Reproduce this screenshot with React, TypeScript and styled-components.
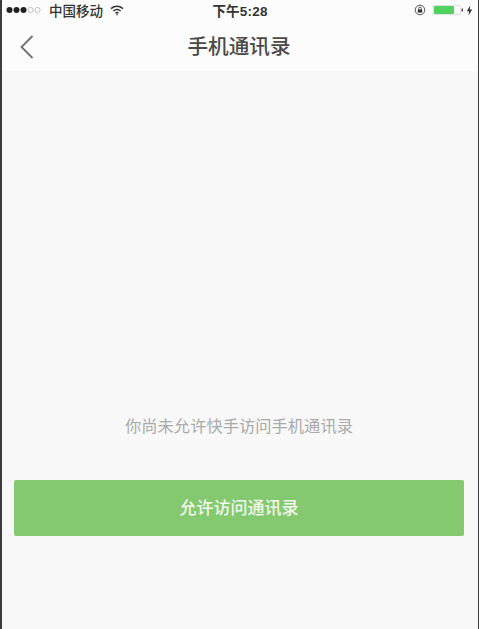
import React from "react";
import styled, { createGlobalStyle } from "styled-components";

const GlobalStyle = createGlobalStyle`
  html, body {
    margin: 0;
    padding: 0;
    background: #f8f8f8;
  }
  * {
    box-sizing: border-box;
  }
`;

const Page = styled.div`
  width: 479px;
  height: 629px;
  overflow: hidden;
  padding: 0 1px 0 2px;
  background: #3c3c3c;
  font-family: "Liberation Sans", "Noto Sans CJK SC", sans-serif;
`;

const Screen = styled.div`
  height: 100%;
  display: flex;
  flex-direction: column;
  background: #f8f8f8;
`;

const Header = styled.div`
  height: 71px;
  background: #fcfcfc;
  flex-shrink: 0;
`;

const StatusBar = styled.div`
  height: 20px;
  padding: 0 5px 0 4px;
  display: grid;
  grid-template-columns: 1fr auto 1fr;
  align-items: center;
  color: #333;
`;

const StatusLeft = styled.div`
  display: flex;
  align-items: center;
  gap: 3px;
`;

const StatusRight = styled.div`
  display: flex;
  align-items: center;
  justify-content: flex-end;
`;

const Clock = styled.div`
  font-weight: 700;
  font-size: 13.5px;
  letter-spacing: 0.2px;
  margin-left: 1px;
`;

const Carrier = styled.span`
  font-size: 13.5px;
  font-weight: 500;
  margin-right: 4px;
`;

const NavBar = styled.div`
  height: 51px;
  position: relative;
  display: flex;
  align-items: center;
  justify-content: center;
  padding-right: 2px;
`;

const BackIcon = styled.svg`
  position: absolute;
  left: 17px;
  top: 14px;
`;

const Title = styled.h1`
  margin: 0 0 2px;
  font-size: 20.6px;
  font-weight: 500;
  color: #4a4a4a;
`;

const Body = styled.div`
  flex: 1;
  display: flex;
  flex-direction: column;
  align-items: center;
  padding: 343px 14px 0 12px;
`;

const Hint = styled.p`
  margin: 0;
  font-size: 16.3px;
  line-height: 24px;
  color: #aaaaaa;
`;

const AllowButton = styled.button`
  margin-top: 42px;
  width: 100%;
  height: 56px;
  padding: 0 0 3px;
  border: none;
  border-radius: 2px;
  background: #84c870;
  color: #f2f8ec;
  font-family: inherit;
  font-size: 17px;
  font-weight: 500;
`;

export default function App() {
  return (
    <>
      <GlobalStyle />
      <Page>
        <Screen>
          <Header>
            <StatusBar>
              <StatusLeft>
                <svg width="40" height="8" viewBox="0 0 40 8">
                  <circle cx="3.5" cy="4" r="3" fill="#222" />
                  <circle cx="10.5" cy="4" r="3" fill="#222" />
                  <circle cx="17.5" cy="4" r="3" fill="#222" />
                  <circle cx="24.5" cy="4" r="2.6" fill="none" stroke="#aaa" strokeWidth="0.7" />
                  <circle cx="31.5" cy="4" r="2.6" fill="none" stroke="#aaa" strokeWidth="0.7" />
                </svg>
                <Carrier>中国移动</Carrier>
                <svg width="14" height="11" viewBox="0 0 14 11" fill="none" stroke="#333" strokeWidth="1.5">
                  <path d="M1 3.6C4.6.6 9.4.6 13 3.6" />
                  <path d="M3.3 6C5.6 4.2 8.4 4.2 10.7 6" />
                  <path d="M5.5 8.2C6.4 7.5 7.6 7.5 8.5 8.2" />
                  <circle cx="7" cy="9.8" r="0.7" fill="#333" stroke="none" />
                </svg>
              </StatusLeft>
              <Clock>下午5:28</Clock>
              <StatusRight>
                <svg width="12" height="12" viewBox="0 0 12 12">
                  <circle cx="6" cy="6" r="4.8" fill="none" stroke="#555" strokeWidth="1" />
                  <rect x="3.8" y="5.4" width="4.4" height="3.2" fill="#333" />
                  <path d="M4.7 5.4V4.4a1.3 1.3 0 0 1 2.6 0v1" fill="none" stroke="#333" strokeWidth="0.8" />
                </svg>
                <svg width="32" height="12" viewBox="0 0 32 12" style={{ marginLeft: 7 }}>
                  <rect x="0.5" y="1.5" width="27" height="9" rx="1.5" fill="#fff" stroke="#ccc" strokeWidth="0.6" />
                  <rect x="1" y="2" width="20" height="8" rx="1" fill="#4fd25f" />
                  <rect x="28.5" y="4.5" width="1.5" height="3" fill="#555" />
                </svg>
                <svg width="7" height="11" viewBox="0 0 7 11" style={{ marginLeft: 1 }}>
                  <path d="M4.2 0.5 0.8 6.2h2.3L2.5 10.5 6.2 4.6H3.8z" fill="#333" />
                </svg>
              </StatusRight>
            </StatusBar>
            <NavBar>
              <BackIcon width="16" height="26" viewBox="0 0 16 26" fill="none" stroke="#707070" strokeWidth="1.8">
                <path d="M13.5 2 2.5 13l11 11" />
              </BackIcon>
              <Title>手机通讯录</Title>
            </NavBar>
          </Header>
          <Body>
            <Hint>你尚未允许快手访问手机通讯录</Hint>
            <AllowButton>允许访问通讯录</AllowButton>
          </Body>
        </Screen>
      </Page>
    </>
  );
}
